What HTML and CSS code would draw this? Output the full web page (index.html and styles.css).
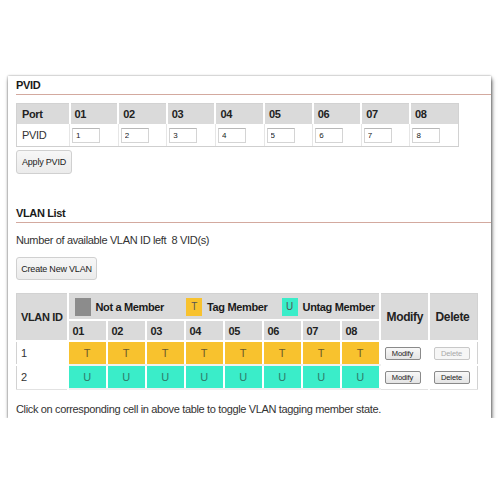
FILE: index.html
```html
<!DOCTYPE html>
<html>
<head>
<meta charset="utf-8">
<link rel="stylesheet" href="styles.css">
</head>
<body>
<div class="panel">
  <h2 class="section-title">PVID</h2>
  <table class="pvid-table">
    <colgroup><col class="col-label"><col><col><col><col><col><col><col><col></colgroup>
    <tr class="hdr">
      <th>Port</th><th>01</th><th>02</th><th>03</th><th>04</th><th>05</th><th>06</th><th>07</th><th>08</th>
    </tr>
    <tr>
      <td class="label">PVID</td>
      <td><input class="pvid-input" value="1"></td>
      <td><input class="pvid-input" value="2"></td>
      <td><input class="pvid-input" value="3"></td>
      <td><input class="pvid-input" value="4"></td>
      <td><input class="pvid-input" value="5"></td>
      <td><input class="pvid-input" value="6"></td>
      <td><input class="pvid-input" value="7"></td>
      <td><input class="pvid-input" value="8"></td>
    </tr>
  </table>
  <button class="btn btn-apply">Apply PVID</button>

  <h2 class="section-title vlan-title">VLAN List</h2>
  <p class="info">Number of available VLAN ID left&nbsp; 8 VID(s)</p>
  <button class="btn btn-create">Create New VLAN</button>

  <table class="vlan-table">
    <colgroup><col class="col-id"><col><col><col><col><col><col><col><col><col class="col-act"><col class="col-act"></colgroup>
    <tr class="legend-row">
      <th rowspan="2" class="id-head">VLAN ID</th>
      <th colspan="8" class="legend">
        <div class="legend-items">
          <span class="swatch sw-none"></span><span class="legend-text lt-none">Not a Member</span>
          <span class="swatch sw-tag">T</span><span class="legend-text lt-tag">Tag Member</span>
          <span class="swatch sw-untag">U</span><span class="legend-text">Untag Member</span>
        </div>
      </th>
      <th rowspan="2" class="act-head">Modify</th>
      <th rowspan="2" class="act-head">Delete</th>
    </tr>
    <tr class="port-row">
      <th>01</th><th>02</th><th>03</th><th>04</th><th>05</th><th>06</th><th>07</th><th>08</th>
    </tr>
    <tr class="data-row">
      <td class="vid">1</td>
      <td class="cell tag">T</td><td class="cell tag">T</td><td class="cell tag">T</td><td class="cell tag">T</td>
      <td class="cell tag">T</td><td class="cell tag">T</td><td class="cell tag">T</td><td class="cell tag">T</td>
      <td class="act"><button class="mini">Modify</button></td>
      <td class="act"><button class="mini disabled">Delete</button></td>
    </tr>
    <tr class="data-row">
      <td class="vid">2</td>
      <td class="cell untag">U</td><td class="cell untag">U</td><td class="cell untag">U</td><td class="cell untag">U</td>
      <td class="cell untag">U</td><td class="cell untag">U</td><td class="cell untag">U</td><td class="cell untag">U</td>
      <td class="act"><button class="mini">Modify</button></td>
      <td class="act"><button class="mini">Delete</button></td>
    </tr>
  </table>
  <p class="note">Click on corresponding cell in above table to toggle VLAN tagging member state.</p>
</div>
</body>
</html>
```

FILE: styles.css
```css
html, body {
  margin: 0;
  padding: 0;
  background: #ffffff;
}

body {
  font-family: "Liberation Sans", Arial, sans-serif;
  color: #222;
  letter-spacing: -0.35px;
}

.panel {
  margin: 76px 0 0 8px;
  width: 475px;
  height: 339px;
  padding: 3px 0 0 8px;
  background: #fff;
  box-shadow: 1px 3px 4px rgba(0, 0, 0, 0.6), 0 0 2px rgba(0, 0, 0, 0.4);
}

.section-title {
  margin: 0;
  font-size: 11px;
  line-height: 13px;
  font-weight: bold;
  color: #1a1a1a;
  padding-bottom: 2px;
  border-bottom: 1px solid #d3a99f;
}

.pvid-table {
  margin-top: 8px;
  width: 443px;
  table-layout: fixed;
  border-collapse: collapse;
  border: 1px solid #d2d2d2;
}

.col-label { width: 53px; }

.pvid-table th {
  background: #dadada;
  height: 20px;
  padding: 0 0 0 4px;
  text-align: left;
  font-size: 11px;
  font-weight: bold;
  border-right: 2px solid #fff;
  white-space: nowrap;
}

.pvid-table th:first-child { padding-left: 5px; }
.pvid-table th:last-child { border-right: none; }

.pvid-table td {
  height: 22px;
  padding: 0 0 0 2px;
  border-left: 1px solid #e6e6e6;
  border-bottom: 1px solid #cfcfcf;
  font-size: 11px;
  color: #333;
}

.pvid-table td.label { padding-left: 5px; border-left: none; }

.pvid-input {
  display: block;
  box-sizing: border-box;
  width: 28px;
  height: 15px;
  margin: 0;
  padding: 0 0 0 3px;
  border: 1px solid #d4d4d4;
  border-top-color: #b8b8b8;
  font-family: "Liberation Sans", Arial, sans-serif;
  font-size: 8px;
  color: #222;
  background: #fff;
}

.btn {
  display: block;
  box-sizing: border-box;
  padding: 0;
  border: 1px solid #d0d0d0;
  border-radius: 3px;
  background: linear-gradient(#f7f7f7, #ebebeb);
  font-family: "Liberation Sans", Arial, sans-serif;
  font-size: 9px;
  letter-spacing: -0.2px;
  color: #222;
  white-space: nowrap;
}

.btn-apply {
  margin-top: 3px;
  width: 56px;
  height: 24px;
}

.vlan-title {
  margin-top: 33px;
}

.info {
  margin: 11px 0 0;
  font-size: 11px;
  line-height: 13px;
  color: #333;
}

.btn-create {
  margin-top: 10px;
  width: 81px;
  height: 23px;
}

.vlan-table {
  margin-top: 13px;
  width: 462px;
  table-layout: fixed;
  border-collapse: collapse;
  border: 1px solid #d2d2d2;
}

.col-id { width: 51px; }
.col-act { width: 49px; }

.vlan-table th {
  background: #dadada;
  font-size: 11px;
  font-weight: bold;
  text-align: left;
  border: 2px solid #fff;
  padding: 0 0 0 4px;
  white-space: nowrap;
}

.vlan-table tr:first-child th { border-top: none; }
.vlan-table th.id-head { border-left: none; padding-left: 4px; }
.vlan-table th.act-head { font-size: 12px; padding-left: 6px; }
.vlan-table th.act-head:last-child { border-right: none; }

.legend-row th { height: 25px; }
.port-row th { height: 19px; }

.vlan-table th.legend {
  padding: 0 0 0 6px;
}

.legend-items {
  display: flex;
  align-items: center;
}

.swatch {
  flex: none;
  display: inline-block;
  width: 16px;
  height: 18px;
  font-size: 10px;
  font-weight: normal;
  line-height: 18px;
  text-align: center;
  color: #555;
}

.sw-none { background: #8c8c8c; }
.sw-tag { background: #f8c22e; }
.sw-untag { background: #3aedc9; }

.legend-text {
  margin-left: 5px;
  font-size: 11px;
  font-weight: bold;
  color: #1a1a1a;
  white-space: nowrap;
}

.lt-none { margin-right: 22px; }
.lt-tag { margin-right: 14px; }

.vlan-table td {
  height: 20px;
  font-size: 11px;
  color: #333;
  border: 2px solid #fff;
}

.data-row td { border-bottom-color: #f0f0f0; }

.vlan-table td.vid {
  padding-left: 4px;
  border-left: none;
  border-bottom: 1px solid #e2e2e2;
}

.cell {
  text-align: center;
  font-size: 10px;
  color: #666;
}

.cell.tag { background: #f8c22e; color: #6b5a2a; }
.cell.untag { background: #3aedc9; color: #2f7a6a; }

.vlan-table td.act {
  padding: 0 0 0 4px;
  border-bottom: 1px solid #e2e2e2;
}
.vlan-table td.act:last-child { border-right: none; }

.mini {
  display: block;
  box-sizing: border-box;
  width: 36px;
  height: 13px;
  padding: 0;
  border: 1px solid #8a8a8a;
  border-radius: 2px;
  background: linear-gradient(#f8f8f8, #e4e4e4);
  font-family: "Liberation Sans", Arial, sans-serif;
  font-size: 7.5px;
  letter-spacing: -0.1px;
  line-height: 11px;
  color: #222;
}

.mini.disabled {
  border-color: #c8c8c8;
  color: #a8a8a8;
  background: #f6f6f6;
}

.note {
  margin: 13px 0 0;
  font-size: 11px;
  line-height: 13px;
  color: #333;
}
```
